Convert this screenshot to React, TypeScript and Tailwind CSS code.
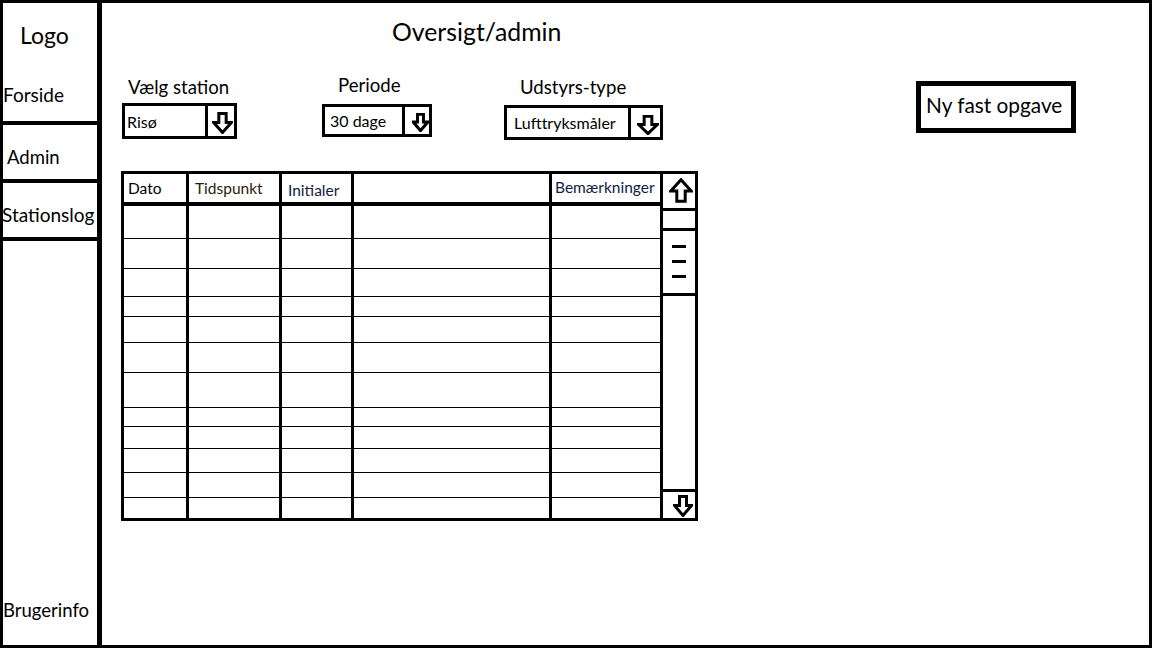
import React from 'react';

// Wireframe: oversigt/admin side med stationsvalg og log-tabel

const ROW_HEIGHTS = [32, 29, 27, 19, 25, 29, 34, 18, 21, 23, 24, 20];

const COLUMNS = [
  { key: 'dato', label: 'Dato', width: 'w-[65px]', text: 'pl-[4px] pt-[5px]', color: 'text-black' },
  { key: 'tid', label: 'Tidspunkt', width: 'w-[93px]', text: 'pl-[6px] pt-[5px]', color: 'text-[#2a1c08]' },
  { key: 'init', label: 'Initialer', width: 'w-[72px]', text: 'pl-[6px] pt-[7px]', color: 'text-[#10213d]' },
  { key: 'blank', label: '', width: 'w-[198px]', text: '', color: 'text-black' },
  { key: 'bem', label: 'Bemærkninger', width: 'w-[111px]', text: 'pl-[3px] pt-[4px]', color: 'text-[#0d2246]' },
];

const Arrow: React.FC<{ w: number; h: number; up?: boolean; className?: string }> = ({ w, h, up, className }) => (
  <svg
    width={w}
    height={h}
    viewBox="0 0 20 22"
    preserveAspectRatio="none"
    className={className}
    style={up ? { transform: 'scaleY(-1)' } : undefined}
  >
    <path
      d="M6.5 1.5 H13.5 V10.5 H18.5 L10 20.5 L1.5 10.5 H6.5 Z"
      fill="white"
      stroke="black"
      strokeWidth={3}
      strokeLinejoin="miter"
      vectorEffect="non-scaling-stroke"
    />
  </svg>
);

export default function App() {
  return (
    <div className="w-[1152px] h-[648px] border-[3px] border-black bg-white flex text-black font-['Lato',sans-serif] overflow-hidden">
      {/* Sidebar */}
      <aside className="w-[99px] shrink-0 border-r-[5px] border-black flex flex-col">
        <div className="h-[122px] border-b-4 border-black flex flex-col">
          <div className="pt-[19px] pl-[17px] text-[23px] leading-[27px]">Logo</div>
          <div className="mt-[35px] text-[19px] leading-[22px]">Forside</div>
        </div>
        <div className="h-[58px] border-b-4 border-black pt-[21px] pl-[4px] text-[18.5px] leading-[22px]">Admin</div>
        <div className="h-[58px] border-b-4 border-black pt-[21px] text-[19px] leading-[22px] -ml-[1px] whitespace-nowrap">Stationslog</div>
        <div className="flex-1" />
        <div className="mb-[24px] text-[18.5px] leading-[22px]">Brugerinfo</div>
      </aside>

      {/* Main */}
      <main className="flex-1 flex flex-col">
        <h1 className="pt-[15px] pl-[290px] text-[24.8px] leading-[28px]">Oversigt/admin</h1>

        <div className="mt-[28px] flex items-start">
          {/* Vælg station */}
          <div className="ml-[20px] mt-[2px] w-[115px]">
            <div className="pl-[6px] text-[18.6px] leading-[22px] whitespace-nowrap">Vælg station</div>
            <div className="mt-[5px] h-[36px] border-[3px] border-black flex">
              <div className="w-[80px] pl-[2px] flex items-center text-[16px] leading-[19px]">Risø</div>
              <div className="flex-1 border-l-[3px] border-black">
                <Arrow w={21} h={22} className="ml-[4px] mt-[6px]" />
              </div>
            </div>
          </div>

          {/* Periode */}
          <div className="ml-[85px] w-[110px]">
            <div className="pl-[16px] text-[18.6px] leading-[22px]">Periode</div>
            <div className="mt-[8px] h-[33px] border-[3px] border-black flex">
              <div className="w-[77px] pl-[5px] flex items-center text-[16px] leading-[19px] whitespace-nowrap">30 dage</div>
              <div className="flex-1 border-l-[3px] border-black overflow-hidden">
                <Arrow w={17} h={19} className="ml-[7px] mt-[6px]" />
              </div>
            </div>
          </div>

          {/* Udstyrs-type */}
          <div className="ml-[72px] mt-[2px] w-[159px]">
            <div className="pl-[16px] text-[18.6px] leading-[22px]">Udstyrs-type</div>
            <div className="mt-[7px] h-[35px] border-[3px] border-black flex">
              <div className="w-[121px] pl-[7px] flex items-center text-[16px] leading-[19px] whitespace-nowrap">Lufttryksmåler</div>
              <div className="flex-1 border-l-[3px] border-black">
                <Arrow w={22} h={20} className="ml-[6px] mt-[7px]" />
              </div>
            </div>
          </div>

          <button className="ml-[253px] mt-[7px] w-[160px] h-[52px] border-[5px] border-black flex items-center pl-[5px] pb-[4px] text-[20.8px] leading-[24px] whitespace-nowrap">
            Ny fast opgave
          </button>
        </div>

        {/* Tabel */}
        <div className="mt-[31px] ml-[19px] w-[577px] h-[350px] border-[3px] border-black flex">
          <div className="w-[539px] flex flex-col">
            <div className="h-[32px] border-b-4 border-black flex">
              {COLUMNS.map((col) => (
                <div
                  key={col.key}
                  className={`${col.width} h-full border-r-[3px] border-black text-[15.5px] leading-[18px] whitespace-nowrap ${col.text} ${col.color}`}
                >
                  {col.label}
                </div>
              ))}
            </div>
            {ROW_HEIGHTS.map((h, i) => (
              <div
                key={i}
                className={`flex ${i < ROW_HEIGHTS.length - 1 ? 'border-b border-black' : ''}`}
                style={{ height: i < ROW_HEIGHTS.length - 1 ? h + 1 : h }}
              >
                {COLUMNS.map((col) => (
                  <div key={col.key} className={`${col.width} h-full border-r-[3px] border-black`} />
                ))}
              </div>
            ))}
          </div>

          {/* Scrollbar */}
          <div className="flex-1 flex flex-col">
            <div className="h-[37px] border-b-[3px] border-black">
              <Arrow w={24} h={25} up className="ml-[6px] mt-[4px]" />
            </div>
            <div className="h-[17px]" />
            <div className="h-[68px] border-y-[3px] border-black flex flex-col items-center pt-[14px] gap-[12px]">
              <div className="w-[14px] h-[3px] bg-black" />
              <div className="w-[14px] h-[3px] bg-black" />
              <div className="w-[14px] h-[3px] bg-black" />
            </div>
            <div className="flex-1 border-b-[3px] border-black" />
            <div className="h-[26px]">
              <Arrow w={20} h={22} className="ml-[10px] mt-[3px]" />
            </div>
          </div>
        </div>
      </main>
    </div>
  );
}
